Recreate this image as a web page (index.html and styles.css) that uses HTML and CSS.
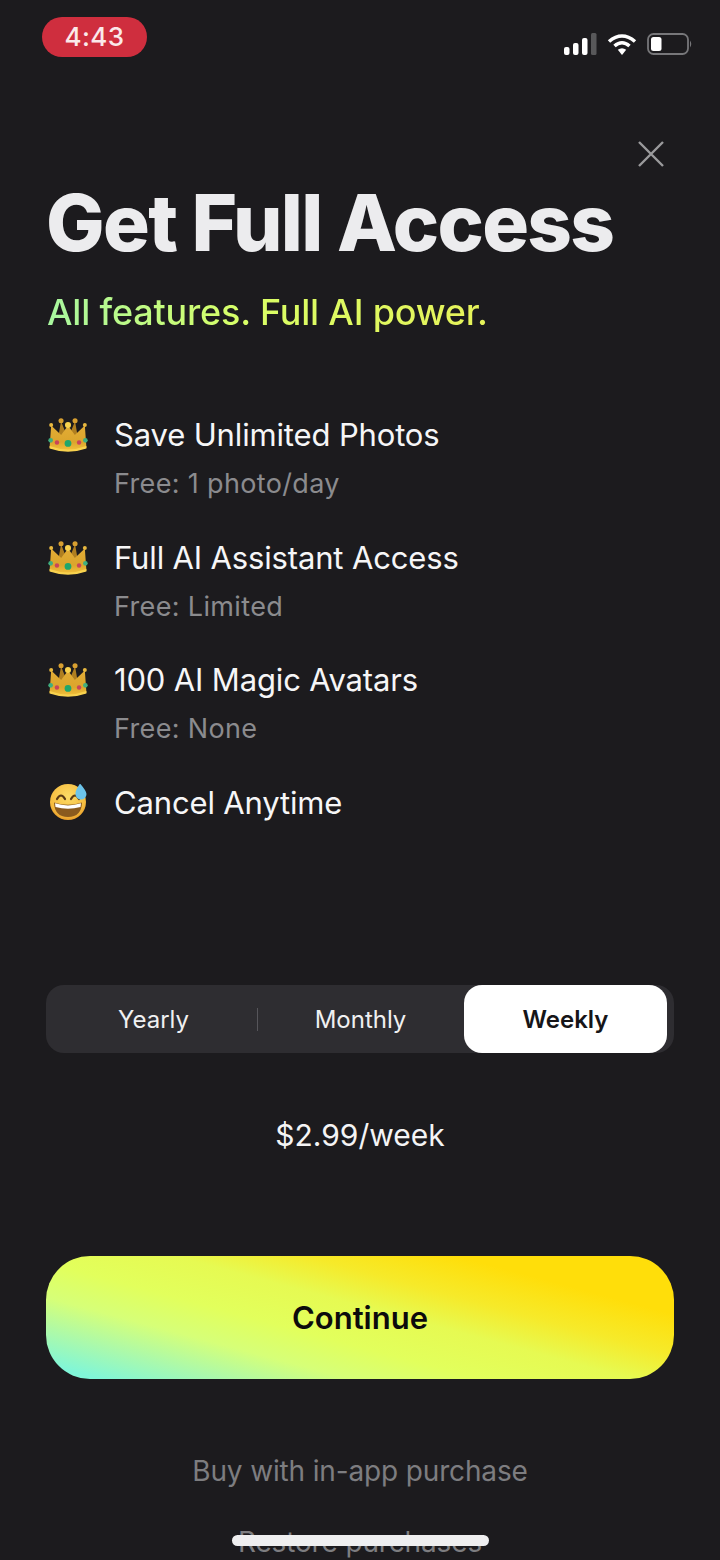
FILE: index.html
```html
<!DOCTYPE html>
<html lang="en">
<head>
<meta charset="utf-8">
<title>Get Full Access</title>
<link rel="stylesheet" href="styles.css">
</head>
<body>
<svg class="defs" width="0" height="0" aria-hidden="true">
  <defs>
    <linearGradient id="crownGold" x1="0" y1="0" x2="0" y2="1">
      <stop offset="0" stop-color="#e2ac36"/>
      <stop offset="0.65" stop-color="#dba52c"/>
      <stop offset="1" stop-color="#f3c23c"/>
    </linearGradient>
    <radialGradient id="faceGold" cx="0.5" cy="0.35" r="0.7">
      <stop offset="0" stop-color="#fcdc66"/>
      <stop offset="0.7" stop-color="#f6bd40"/>
      <stop offset="1" stop-color="#e49424"/>
    </radialGradient>
    <symbol id="crown" viewBox="0 0 38 34">
      <path d="M12.400 5 L9.500 21 L28.500 21 L25.700 5 L22 14 L16 14 Z" fill="#b07f20"/>
      <circle cx="12.400" cy="4.500" r="2.400" fill="#d79f30"/>
      <circle cx="25.700" cy="4.500" r="2.400" fill="#d79f30"/>
      <path d="M19 9 L25.500 18 L35 9 L36.500 30 Q19 36 1.500 30 L3 9 L12.500 18 Z" fill="url(#crownGold)"/>
      <circle cx="3" cy="8.500" r="1.900" fill="#e8b840"/>
      <circle cx="35" cy="8.500" r="1.900" fill="#e8b840"/>
      <circle cx="19" cy="8.500" r="2.900" fill="#f8d24e"/>
      <path d="M1.500 28.500 Q19 35 36.500 28.500 L36.500 30.800 Q19 37 1.500 30.800 Z" fill="#f8d24e"/>
      <circle cx="2.500" cy="23" r="2.200" fill="#3fae7f"/>
      <circle cx="35.500" cy="23" r="2.200" fill="#3fae7f"/>
      <circle cx="8.500" cy="25" r="2.100" fill="#c9455a"/>
      <circle cx="29.500" cy="25" r="2.100" fill="#c9455a"/>
      <circle cx="19" cy="26" r="3.200" fill="#1fa66b"/>
    </symbol>
  </defs>
</svg>
<main class="screen">
  <header class="status">
    <div class="clock">4:43</div>
    <div class="status-icons">
      <svg class="signal" width="33" height="22" viewBox="0 0 33 22">
        <rect x="0" y="14" width="5.500" height="8" rx="2" fill="#fff"/>
        <rect x="9" y="10" width="5.500" height="12" rx="2" fill="#fff"/>
        <rect x="18" y="5" width="5.500" height="17" rx="2" fill="#fff"/>
        <rect x="27" y="0" width="5.500" height="22" rx="1.500" fill="#58585a"/>
      </svg>
      <svg class="wifi" width="30" height="22" viewBox="0 0 30 22" fill="none" stroke="#fff" stroke-width="3.600">
        <path d="M2 8.500 Q15 -2.500 28 8.500"/>
        <path d="M7.500 13 Q15 6.500 22.500 13"/>
        <path d="M15 22 L10.800 16.800 Q15 13.600 19.200 16.800 Z" fill="#fff" stroke="none"/>
      </svg>
      <svg class="battery" width="46" height="22" viewBox="0 0 46 22">
        <rect x="2" y="1" width="40" height="20" rx="5.500" fill="none" stroke="#77777a" stroke-width="1.800"/>
        <rect x="5" y="4" width="10.500" height="14" rx="2.500" fill="#fff"/>
        <path d="M44 7.500 Q46.500 11 44 14.500 Z" fill="#77777a"/>
      </svg>
    </div>
  </header>

  <div class="close-row">
    <svg class="close" width="26" height="26" viewBox="0 0 26 26" fill="none" stroke="#9a9a9c" stroke-width="2.400">
      <path d="M1 1 L25 25 M25 1 L1 25"/>
    </svg>
  </div>

  <h1 class="title">Get Full Access</h1>
  <p class="subtitle">All features. Full AI power.</p>

  <ul class="features">
    <li class="feature">
      <svg class="emoji" width="40" height="36"><use href="#crown"/></svg>
      <div class="feature-text">
        <div class="feature-name">Save Unlimited Photos</div>
        <div class="feature-note">Free: 1 photo/day</div>
      </div>
    </li>
    <li class="feature">
      <svg class="emoji" width="40" height="36"><use href="#crown"/></svg>
      <div class="feature-text">
        <div class="feature-name">Full AI Assistant Access</div>
        <div class="feature-note">Free: Limited</div>
      </div>
    </li>
    <li class="feature">
      <svg class="emoji" width="40" height="36"><use href="#crown"/></svg>
      <div class="feature-text">
        <div class="feature-name">100 AI Magic Avatars</div>
        <div class="feature-note">Free: None</div>
      </div>
    </li>
    <li class="feature">
      <svg class="emoji" width="40" height="36" viewBox="0 0 40 36">
        <circle cx="20" cy="18" r="18" fill="url(#faceGold)"/>
        <path d="M9 15 Q13 8 17 15" fill="none" stroke="#5a3a14" stroke-width="2.200" stroke-linecap="round"/>
        <path d="M23 15 Q27 8 31 15" fill="none" stroke="#5a3a14" stroke-width="2.200" stroke-linecap="round"/>
        <path d="M6 18.500 Q20 23 34 18.500 Q33.500 33 20 33 Q6.500 33 6 18.500 Z" fill="#8a5a1e"/>
        <path d="M7 19.300 Q20 23.500 33 19.300 L32.500 23 Q20 26.500 7.500 23 Z" fill="#fff"/>
        <path d="M32 -0.500 Q27 7 27.500 10 A5.500 5.500 0 0 0 38.500 10 Q38.500 7 32 -0.500 Z" fill="#6cc4ea"/>
      </svg>
      <div class="feature-text">
        <div class="feature-name">Cancel Anytime</div>
      </div>
    </li>
  </ul>

  <div class="tabs">
    <div class="tab">Yearly</div>
    <div class="tab tab-divided">Monthly</div>
    <div class="tab tab-active">Weekly</div>
  </div>

  <p class="price">$2.99/week</p>

  <button class="cta">Continue</button>

  <p class="note">Buy with in-app purchase</p>
  <p class="note note-restore">Restore purchases</p>
  <div class="home-bar"></div>
</main>
</body>
</html>
```
FILE: styles.css
```css
* { box-sizing: border-box; }
html, body { margin: 0; padding: 0; }
body {
  width: 720px;
  height: 1560px;
  overflow: hidden;
  background: #1c1b1e;
  font-family: Inter, "Noto Sans", "Liberation Sans", sans-serif;
  color: #fff;
}
.defs { position: absolute; }
.screen {
  position: relative;
  height: 1560px;
  padding: 17px 46px 0 46px;
  overflow: hidden;
}
.status {
  display: flex;
  justify-content: space-between;
  align-items: flex-start;
  margin: 0 -18px 0 -4px;
  height: 40px;
}
.clock {
  width: 105px;
  height: 40px;
  border-radius: 20px;
  background: #cf2e3e;
  color: #fbe9ea;
  font-size: 26px;
  font-weight: 500;
  letter-spacing: 0.4px;
  line-height: 40px;
  text-align: center;
}
.status-icons {
  display: flex;
  align-items: center;
  gap: 9px;
  margin-top: 16px;
}
.signal { margin-right: 1px; }
.close-row {
  display: flex;
  justify-content: flex-end;
  margin: 84px 10px 0 0;
  height: 26px;
}
.title {
  margin: 12px 0 0 0;
  font-size: 78px;
  line-height: 88px;
  font-weight: 800;
  letter-spacing: -1.7px;
  color: #ececee;
  white-space: nowrap;
}
.subtitle {
  margin: 23px 0 0 0;
  font-size: 36px;
  line-height: 44px;
  font-weight: 500;
  letter-spacing: -0.2px;
  width: max-content;
  margin-left: 1px;
  background: linear-gradient(90deg, #a8f7a0 0%, #d9ff66 45%, #e6f25a 100%);
  -webkit-background-clip: text;
  background-clip: text;
  color: transparent;
}
.features {
  list-style: none;
  margin: 81px 0 0 0;
  padding: 0;
  display: flex;
  flex-direction: column;
  gap: 37.500px;
}
.feature {
  display: flex;
  align-items: flex-start;
  gap: 26px;
  margin-left: 2px;
}
.emoji { flex: none; margin-top: 1px; }
.feature-name {
  font-size: 31px;
  line-height: 40px;
  letter-spacing: -0.15px;
  color: #f6f6f7;
}
.feature-note {
  margin-top: 13px;
  font-size: 27px;
  line-height: 32px;
  letter-spacing: 0.35px;
  color: #8b8b8e;
}
.tabs {
  display: flex;
  margin-top: 162.500px;
  height: 68px;
  border-radius: 18px;
  background: #2e2d31;
  padding: 0 7px 0 4px;
}
.tab {
  position: relative;
  flex: 1;
  display: flex;
  align-items: center;
  justify-content: center;
  font-size: 24px;
  color: #f0f0f1;
}
.tab-divided::before {
  content: "";
  position: absolute;
  left: 0;
  top: 23px;
  height: 23px;
  width: 1px;
  background: #56555a;
}
.tab-active {
  flex: none;
  width: 203px;
  background: #fff;
  color: #161518;
  font-weight: 600;
  border-radius: 18px;
}
.price {
  margin: 62px 0 0 0;
  font-size: 30px;
  line-height: 40px;
  text-align: center;
  color: #f4f4f5;
}
.cta {
  display: block;
  width: 100%;
  height: 123px;
  margin-top: 101px;
  border: 0;
  border-radius: 44px;
  background: linear-gradient(195deg, #ffde0a 0%, #ffde0a 20%, #f6ea2a 34%, #e6fa52 46%, #e2ff5c 60%, #d6ff78 72%, #aaf9ac 84%, #80f6d8 95%);
  color: #0c0b0c;
  font-family: inherit;
  font-size: 31px;
  font-weight: 600;
  padding: 0;
}
.note {
  margin: 72px 0 0 0;
  font-size: 28px;
  line-height: 40px;
  letter-spacing: -0.15px;
  text-align: center;
  color: #7d7d80;
}
.note-restore { margin-top: 31px; }
.home-bar {
  position: absolute;
  left: 232px;
  top: 1535px;
  width: 257px;
  height: 11px;
  border-radius: 6px;
  background: #efeff0;
}
```
